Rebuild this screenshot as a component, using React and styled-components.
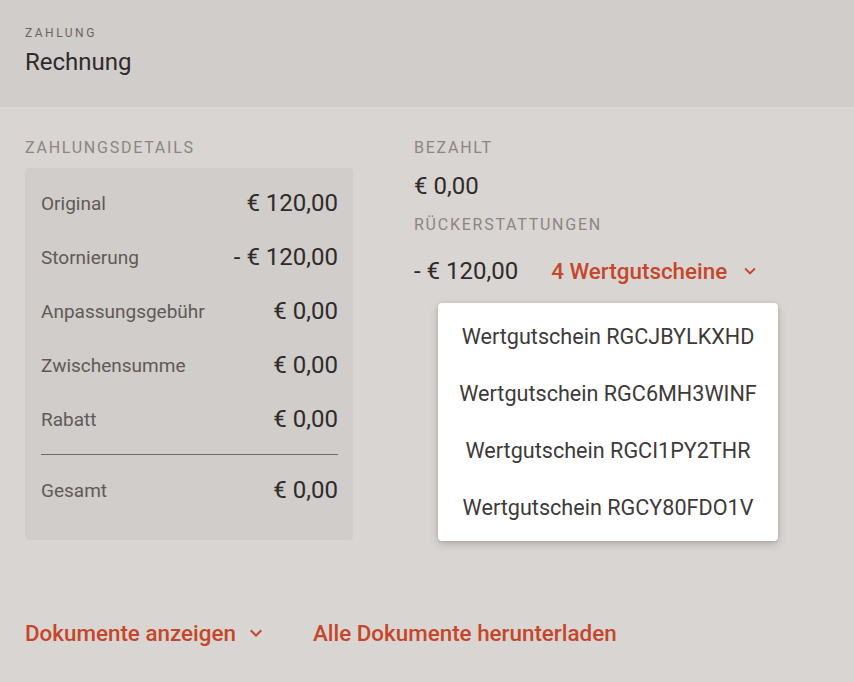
import React from "react";
import styled, { createGlobalStyle } from "styled-components";

const Global = createGlobalStyle`
  html, body { margin: 0; padding: 0; }
  body {
    background: #d9d5d2;
    font-family: Roboto, "Liberation Sans", sans-serif;
    color: #2f2b2a;
    -webkit-font-smoothing: antialiased;
  }
`;

const Page = styled.div`
  width: 854px;
  min-height: 682px;
  background: #d9d5d2;
`;

const Header = styled.header`
  background: #d1cdca;
  height: 107px;
  box-sizing: border-box;
  padding: 25px 25px 0;
  display: flex;
  flex-direction: column;
`;

const Eyebrow = styled.div`
  font-size: 12px;
  line-height: 16px;
  letter-spacing: 2.5px;
  text-transform: uppercase;
  color: #6b6562;
`;

const Title = styled.h1`
  margin: 5px 0 0;
  font-size: 24px;
  line-height: 32px;
  font-weight: 400;
  color: #2f2b2a;
`;

const Body = styled.main`
  display: flex;
  padding: 31px 25px 0;
  gap: 61px;
`;

const Column = styled.section`
  display: flex;
  flex-direction: column;
  width: ${(p) => p.$width || "auto"};
  position: relative;
`;

const Caption = styled.div`
  font-size: 16px;
  line-height: 20px;
  letter-spacing: 1.75px;
  text-transform: uppercase;
  color: #8c8582;
  margin-top: ${(p) => p.$mt || 0}px;
`;

const Card = styled.div`
  margin-top: 10px;
  background: #d1cdca;
  border-radius: 4px;
  padding: 8px 15px 23px 16px;
  display: flex;
  flex-direction: column;
`;

const Row = styled.div`
  height: 54px;
  display: flex;
  align-items: center;
  justify-content: space-between;
`;

const Label = styled.span`
  font-size: 19px;
  color: #605a57;
`;

const Value = styled.span`
  font-size: 24px;
  color: #2f2b2a;
`;

const Divider = styled.hr`
  border: 0;
  border-top: 1px solid #6e6a68;
  margin: 8px 0;
`;

const Amount = styled.div`
  font-size: 24px;
  line-height: 28px;
  color: #2f2b2a;
  margin-top: ${(p) => p.$mt || 0}px;
`;

const RefundRow = styled.div`
  margin-top: 22px;
  display: flex;
  align-items: center;
  gap: 33px;
  height: 28px;
`;

const LinkButton = styled.button`
  border: 0;
  background: none;
  padding: 0;
  font-family: inherit;
  font-size: 22.4px;
  font-weight: 500;
  color: #c4472b;
  display: inline-flex;
  align-items: center;
  gap: ${(p) => p.$gap || 0}px;
  cursor: pointer;
`;

const Menu = styled.ul`
  position: absolute;
  top: 165px;
  left: 24px;
  width: 340px;
  margin: 0;
  padding: 5px 0;
  list-style: none;
  background: #fff;
  border-radius: 4px;
  box-shadow: 0 3px 8px rgba(0, 0, 0, 0.18), 0 1px 3px rgba(0, 0, 0, 0.1);
  z-index: 2;
`;

const MenuItem = styled.li`
  height: 57px;
  display: flex;
  align-items: center;
  justify-content: center;
  font-size: 21.6px;
  color: #3d3a39;
`;

const Footer = styled.footer`
  display: flex;
  align-items: center;
  gap: 45px;
  padding: 0 25px;
  margin-top: 80px;
`;

const Chevron = ({ size = 24 }) => (
  <svg width={size} height={size} viewBox="0 0 24 24" fill="currentColor">
    <path d="M16.59 8.59L12 13.17 7.41 8.59 6 10l6 6 6-6z" />
  </svg>
);

const details = [
  ["Original", "€ 120,00"],
  ["Stornierung", "- € 120,00"],
  ["Anpassungsgebühr", "€ 0,00"],
  ["Zwischensumme", "€ 0,00"],
  ["Rabatt", "€ 0,00"],
];

const vouchers = ["RGCJBYLKXHD", "RGC6MH3WINF", "RGCI1PY2THR", "RGCY80FDO1V"];

export default function App() {
  return (
    <Page>
      <Global />
      <Header>
        <Eyebrow>Zahlung</Eyebrow>
        <Title>Rechnung</Title>
      </Header>
      <Body>
        <Column $width="328px">
          <Caption>Zahlungsdetails</Caption>
          <Card>
            {details.map(([l, v]) => (
              <Row key={l}>
                <Label>{l}</Label>
                <Value>{v}</Value>
              </Row>
            ))}
            <Divider />
            <Row>
              <Label>Gesamt</Label>
              <Value>€ 0,00</Value>
            </Row>
          </Card>
        </Column>
        <Column>
          <Caption>Bezahlt</Caption>
          <Amount $mt={14}>€ 0,00</Amount>
          <Caption $mt={15}>Rückerstattungen</Caption>
          <RefundRow>
            <Amount>- € 120,00</Amount>
            <LinkButton $gap={12}>
              4 Wertgutscheine
              <Chevron size={22} />
            </LinkButton>
          </RefundRow>
          <Menu>
            {vouchers.map((c) => (
              <MenuItem key={c}>Wertgutschein {c}</MenuItem>
            ))}
          </Menu>
        </Column>
      </Body>
      <Footer>
        <LinkButton $gap={8}>
          Dokumente anzeigen
          <Chevron size={24} />
        </LinkButton>
        <LinkButton>Alle Dokumente herunterladen</LinkButton>
      </Footer>
    </Page>
  );
}
